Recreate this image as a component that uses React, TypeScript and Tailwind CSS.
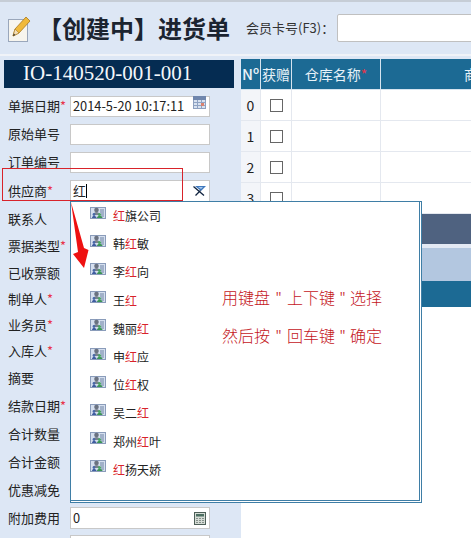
const FONT = "font-['Noto_Sans_CJK_SC','Noto_Sans',sans-serif]";

const rows: { label: string; req?: boolean; h: string; val?: string; input?: string; icon?: string }[] = [
  { label: "单据日期", req: true, h: "h-[28px]", input: "h-[21px]", val: "2014-5-20 10:17:11", icon: "cal" },
  { label: "原始单号", h: "h-[28px]", input: "h-[21px]" },
  { label: "订单编号", h: "h-[28px]", input: "h-[21px]" },
  { label: "供应商", req: true, h: "h-[29px]", input: "h-[22px]", val: "红", icon: "filter" },
  { label: "联系人", h: "h-[27px]" },
  { label: "票据类型", req: true, h: "h-[27px]" },
  { label: "已收票额", h: "h-[27px]" },
  { label: "制单人", req: true, h: "h-[26px]" },
  { label: "业务员", req: true, h: "h-[26px]" },
  { label: "入库人", req: true, h: "h-[26px]" },
  { label: "摘要", h: "h-[28px]" },
  { label: "结款日期", req: true, h: "h-[28px]" },
  { label: "合计数量", h: "h-[28px]" },
  { label: "合计金额", h: "h-[28px]" },
  { label: "优惠减免", h: "h-[28px]" },
  { label: "附加费用", h: "h-[28px]", input: "h-[22px]", val: "0", icon: "calc" },
  { label: "", h: "h-[28px]", input: "h-[22px]" },
];

const names: [string, string, string][] = [
  ["", "红", "旗公司"],
  ["韩", "红", "敏"],
  ["李", "红", "向"],
  ["王", "红", ""],
  ["魏丽", "红", ""],
  ["申", "红", "应"],
  ["位", "红", "权"],
  ["吴二", "红", ""],
  ["郑州", "红", "叶"],
  ["", "红", "扬天娇"],
];

function CalIcon() {
  return (
    <svg className="self-start mt-[-1px]" width="13" height="13" viewBox="0 0 13 13">
      <rect x="0.5" y="0.5" width="12" height="12" fill="#d8e2f0" stroke="#8ea1c0" />
      <rect x="0" y="0" width="13" height="4" fill="#6f86ad" />
      <path d="M1 6.500h11M1 9.500h11M4.500 4v8M8.500 4v8" stroke="#8fa3c4" />
      <rect x="8" y="7" width="3" height="3" fill="#d9826f" />
    </svg>
  );
}

function FilterIcon() {
  return (
    <svg width="13" height="10" viewBox="0 0 13 10">
      <path d="M2 0h11L8 5z" fill="#3f78bd" />
      <path d="M0.500 0.500 11 9.500M7.500 4.500 2.500 9.500" stroke="#10233f" strokeWidth="1.300" fill="none" />
      <path d="M5 1h5L8 3z" fill="#a9cbef" />
    </svg>
  );
}

function CalcIcon() {
  return (
    <svg width="12" height="13" viewBox="0 0 12 13">
      <rect x="0.500" y="0.500" width="11" height="12" fill="#d5dbd5" stroke="#4d5f58" />
      <rect x="2" y="2" width="8" height="2.500" fill="#4d6f62" />
      <path d="M2.500 6.500h1M5.500 6.500h1M8.500 6.500h1M2.500 8.500h1M5.500 8.500h1M8.500 8.500h1M2.500 10.500h1M5.500 10.500h1M8.500 10.500h1" stroke="#33443e" />
    </svg>
  );
}

function PersonIcon() {
  return (
    <svg className="mb-[7px]" width="16" height="12" viewBox="0 0 16 12">
      <rect x="0.500" y="0.500" width="15" height="11" fill="#d5dfef" stroke="#8a9cba" />
      <path d="M10 3h4M10 5h4M11 7h3M11 9h3" stroke="#6d82a3" />
      <circle cx="6.500" cy="3" r="2.300" fill="#6a7280" />
      <path d="M3.500 8c0-2 1.500-3 3-3s3 1 3 3z" fill="#7b828e" />
      <circle cx="9.500" cy="7.500" r="1.600" fill="#4aa565" />
      <path d="M7 11c0-1.500 1-2 2.500-2s3 .5 3 2z" fill="#3b9455" />
      <circle cx="4" cy="7.500" r="1.400" fill="#4a68a8" />
      <path d="M2 11c0-1.500 1-2 2-2s2.500.5 2.500 2z" fill="#3f5ca0" />
    </svg>
  );
}

function PencilIcon() {
  return (
    <svg width="24" height="26" viewBox="0 0 24 26">
      <rect x="0.500" y="3.500" width="19" height="22" fill="#f7f5ee" stroke="#9aa7bb" />
      <path d="M5 20 7 13 18 1l4 4L11 17z" fill="#f0b93a" stroke="#a8791e" strokeWidth="0.800" />
      <path d="M5 20l2-7 4 4z" fill="#f4dfb8" stroke="#a8791e" strokeWidth="0.600" />
      <path d="M5 20l.8-2.500 1.500 1.500z" fill="#333" />
    </svg>
  );
}

function Arrow() {
  return (
    <svg className="absolute left-[71px] top-[202px]" width="18" height="66" viewBox="0 0 18 66">
      <path d="M0 0 L13 46 L17.500 48 L13 66 L2 52 L7 50 Z" fill="#ee1111" />
    </svg>
  );
}

function Star() {
  return <span className="text-[#e8344a]">*</span>;
}

function Quote({ w }: { w: string }) {
  return <span className={`inline-block text-center ${w}`}>"</span>;
}

export default function App() {
  return (
    <div className={`relative w-[471px] h-[538px] overflow-hidden bg-[#dde7f5] ${FONT} text-[13px] text-[#222]`}>
      <div className="h-[2px] bg-[#c6cdd6]" />
      <div className="h-[52px] flex items-center">
        <div className="ml-[8px] mr-[6px] mt-[1px]"><PencilIcon /></div>
        <div className="text-[24px] font-bold text-[#1b2430] whitespace-nowrap w-[204px]">【创建中】进货单</div>
        <div className="ml-[4px] text-[13px] text-[#333] whitespace-nowrap">会员卡号(F3)：</div>
        <div className="ml-[3px] flex-1 min-w-[133px] h-[28px] bg-white border border-[#c0c0c0] rounded-[2px] -mr-[10px]" />
      </div>
      <div className="h-[2px] bg-[#f0f3f8]" />
      <div className="flex h-[482px]">
        <div className="w-[236px] ml-[1px] px-[3px] pt-[4px]">
          <div className="h-[28px] bg-[#052c52] text-[#f4f7fb] text-[21px] font-['Liberation_Serif',serif] flex items-center pl-[19px] whitespace-nowrap">IO-140520-001-001</div>
          <div className="pt-[4px]">
            {rows.map((r, i) => (
              <div key={i} className={`${r.h} flex items-center`}>
                <div className="w-[66px] pl-[4px] whitespace-nowrap">{r.label}{r.req && <Star />}</div>
                {r.input && (
                  <div className={`w-[140px] ${r.input} bg-white border border-[#c8c8c8] flex items-center justify-between pl-[2px] pr-[3px] text-[12.800px] shrink-0`}>
                    <span className="flex items-center">
                      {r.val}
                      {r.icon === "filter" && <span className="w-px h-[14px] bg-black" />}
                    </span>
                    {r.icon === "cal" && <CalIcon />}
                    {r.icon === "filter" && <FilterIcon />}
                    {r.icon === "calc" && <CalcIcon />}
                  </div>
                )}
              </div>
            ))}
          </div>
        </div>

        <div className="ml-[4px] flex-1 min-w-0 overflow-hidden pt-[3px]">
          <div className="h-[31px] flex bg-[#1c6a94] text-[#e8f2f8] text-[14px] border-b border-[#d6e4ef] whitespace-nowrap">
            <div className="w-[20px] shrink-0 flex items-center justify-center border-r border-[#d6e4ef] text-[15px] font-medium">Nº</div>
            <div className="w-[31px] shrink-0 flex items-center justify-center border-r border-[#d6e4ef]">获赠</div>
            <div className="w-[89px] shrink-0 flex items-center justify-center border-r border-[#d6e4ef]">仓库名称<span className="text-[#e8344a]">*</span></div>
            <div className="w-[222px] shrink-0 flex items-center justify-center">商品名称</div>
          </div>
          {[0, 1, 2, 3].map((n) => (
            <div key={n} className="h-[31px] flex bg-white border-b border-[#e4e8ef]">
              <div className="w-[20px] shrink-0 bg-[#f3f5f9] border-r border-[#e4e8ef] flex items-center justify-center text-[14px]">{n}</div>
              <div className="w-[31px] shrink-0 border-r border-[#e4e8ef] flex items-center justify-center">
                <div className="w-[13px] h-[13px] border border-[#666] bg-white" />
              </div>
              <div className="w-[89px] shrink-0 border-r border-[#e4e8ef]" />
              <div className="flex-1" />
            </div>
          ))}
          <div className="h-[30px] bg-[#4f6280]" />
          <div className="h-[4px] bg-[#e3e9f4]" />
          <div className="h-[33px] bg-[#b3c7e0]" />
          <div className="h-[26px] bg-[#1c6a94]" />
          <div className="h-[300px] bg-white" />
        </div>
      </div>

      <div className="absolute left-[2px] top-[168px] w-[181px] h-[33px] border border-[#d8232a]" />

      <div className="absolute left-[70px] top-[201px] w-[352px] h-[302px] bg-white border border-[#3f7ea6] pr-px pb-px flex">
        <div className="flex-1 relative pl-[19px] border-r border-b border-[#3f7ea6]">
          {names.map(([a, b, c], i) => (
            <div key={i} className="h-[28.200px] flex items-center">
              <PersonIcon />
              <span className="ml-[7px] text-[12px] text-[#222] whitespace-nowrap">
                {a}<span className="text-[#d8232a]">{b}</span>{c}
              </span>
            </div>
          ))}
          <div className="absolute left-[151px] top-[85px] text-[16px] font-light text-[#c4161c] whitespace-nowrap leading-[20px]">用键盘<Quote w="w-[17px]" />上下键<Quote w="w-[15px]" />选择</div>
          <div className="absolute left-[151px] top-[123px] text-[16px] font-light text-[#c4161c] whitespace-nowrap leading-[20px]">然后按<Quote w="w-[17px]" />回车键<Quote w="w-[15px]" />确定</div>
        </div>
      </div>
      <Arrow />
    </div>
  );
}
